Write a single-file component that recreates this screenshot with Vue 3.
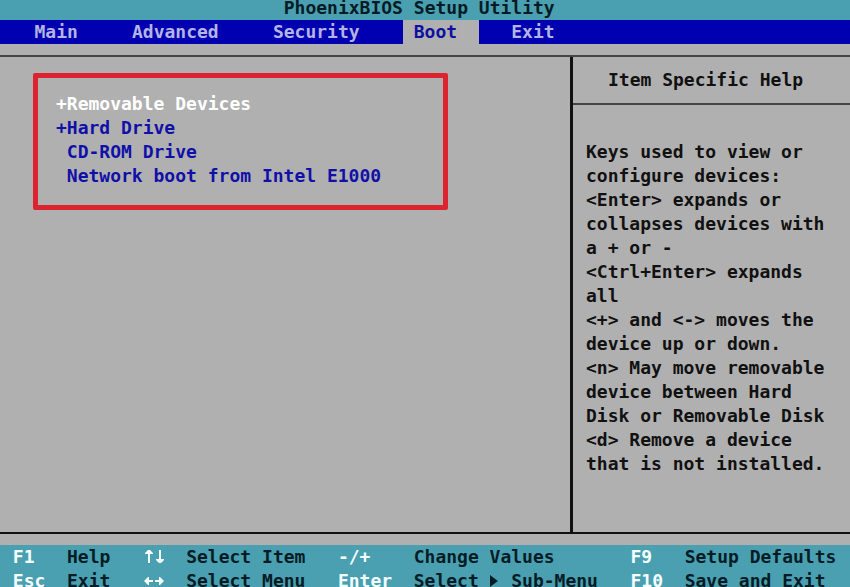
<script setup>
import { ref } from 'vue'

const tabs = ['Main', 'Advanced', 'Security', 'Boot', 'Exit']
const activeTab = ref('Boot')

const devices = [
  { mark: '+', name: 'Removable Devices' },
  { mark: '+', name: 'Hard Drive' },
  { mark: ' ', name: 'CD-ROM Drive' },
  { mark: ' ', name: 'Network boot from Intel E1000' }
]
const selected = ref(0)

const help = [
  'Keys used to view or',
  'configure devices:',
  '<Enter> expands or',
  'collapses devices with',
  'a + or -',
  '<Ctrl+Enter> expands',
  'all',
  '<+> and <-> moves the',
  'device up or down.',
  '<n> May move removable',
  'device between Hard',
  'Disk or Removable Disk',
  '<d> Remove a device',
  'that is not installed.'
]
</script>

<template>
  <div class="screen">
    <h1 class="title">PhoenixBIOS Setup Utility</h1>

    <nav class="tabs">
      <button
        v-for="tab in tabs"
        :key="tab"
        type="button"
        class="tab"
        :class="{ active: tab === activeTab }"
        @click="activeTab = tab"
      >{{ tab }}</button>
    </nav>

    <main class="body">
      <section class="boot">
        <ul class="devices">
          <li v-for="(device, i) in devices" :key="device.name">
            <button
              type="button"
              class="device"
              :class="{ selected: i === selected }"
              @click="selected = i"
            >{{ device.mark }}{{ device.name }}</button>
          </li>
        </ul>
      </section>

      <aside class="help">
        <h2 class="help-title">Item Specific Help</h2>
        <p class="help-text">{{ help.join('\n') }}</p>
      </aside>
    </main>

    <footer class="keys">
      <span class="key">F1</span><span>Help</span>
      <span class="key">
        <svg class="icon arrows" viewBox="0 0 22 24" aria-label="Up and down">
          <path d="M5 18V9H2V8L5 5H7L10 8V9H7V18ZM16 5H18V14H21V15L18 18H16L13 15V14H16Z" />
        </svg>
      </span><span>Select Item</span>
      <span class="key">-/+</span><span>Change Values</span>
      <span class="key">F9</span><span>Setup Defaults</span>

      <span class="key">Esc</span><span>Exit</span>
      <span class="key">
        <svg class="icon arrows" viewBox="0 0 22 24" aria-label="Left and right">
          <path d="M1 12L5 8H6V11H10V13H6V16H5ZM12 11H16V8H17L21 12L17 16H16V13H12Z" />
        </svg>
      </span><span>Select Menu</span>
      <span class="key">Enter</span>
      <span>Select <svg class="icon pointer" viewBox="0 0 11 24" aria-label="opens"><path d="M0 6L8 12L0 18Z" /></svg> Sub-Menu</span>
      <span class="key">F10</span><span>Save and Exit</span>
    </footer>
  </div>
</template>

<style>
body {
  margin: 0;
  overflow: hidden;
}
</style>

<style scoped>
.screen {
  display: flex;
  flex-direction: column;
  height: 100vh;
  overflow: hidden;
  background: #b0b0b0;
  color: #111;
  font: bold 18px/24px "DejaVu Sans Mono", monospace;
  white-space: pre;
}

button {
  border: 0;
  background: none;
  color: inherit;
  font: inherit;
  white-space: pre;
  cursor: pointer;
}

.title {
  margin: 0;
  padding: 0 0 4px calc(26ch + 2px);
  background: #4aa0b0;
  color: #041c26;
  font: inherit;
  line-height: 16px;
}

.tabs {
  display: flex;
  gap: 3ch;
  padding-left: calc(2ch + 2px);
  background: #0000b0;
  color: #b4b4e4;
}

.tab {
  padding: 0 1ch;
}

.tab.active {
  padding-right: 2ch;
  margin-right: -1ch;
  background: #b0b0b0;
  color: #1010a0;
}

.body {
  display: grid;
  grid-template-columns: 570fr 280fr;
  flex: 1;
  margin: 11px 0;
  border-top: 2px solid #444;
  border-bottom: 2px solid #111;
}

.devices {
  width: fit-content;
  margin: 16px 0 0 33px;
  padding: 14px 62px 17px 18px;
  border: 5px solid #dc2430;
  border-radius: 2px;
  color: #1010a8;
  list-style: none;
}

.device {
  display: block;
  padding: 0;
}

.device.selected {
  color: #fff;
}

.help {
  border-left: 3px solid #111;
}

.help-title {
  margin: 0;
  padding: 11px 0 11px 35px;
  border-bottom: 2px solid #444;
  font: inherit;
}

.help-text {
  margin: 0;
  padding: 35px 0 0 13px;
}

.keys {
  display: grid;
  grid-template-columns: 5ch 7ch 4ch 14ch 7ch 20ch 5ch 1fr;
  flex: none;
  margin-bottom: -6px;
  padding-left: calc(1ch + 2px);
  background: #4aa0b0;
  color: #041c26;
}

.key {
  color: #f4ffff;
}

.icon {
  display: inline-block;
  height: 24px;
  fill: currentColor;
  vertical-align: top;
}

.arrows {
  width: 22px;
}

.pointer {
  width: 1ch;
}
</style>
